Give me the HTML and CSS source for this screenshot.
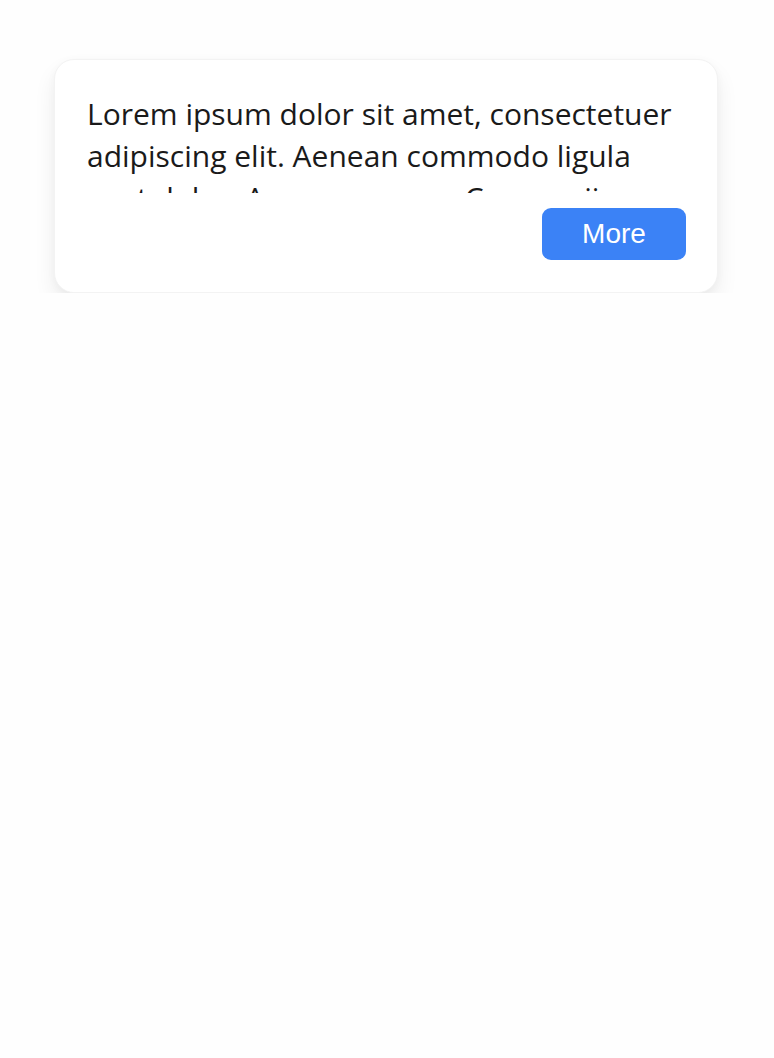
FILE: index.html
```html
<!DOCTYPE html>
<html lang="en">
<head>
<meta charset="utf-8">
<title>Card</title>
<link rel="stylesheet" href="styles.css">
</head>
<body>
<main class="page">
  <section class="card">
    <p class="card-text">Lorem ipsum dolor sit amet, consectetuer adipiscing elit. Aenean commodo ligula eget dolor. Aenean massa. Cum sociis natoque penatibus et magnis dis parturient montes, nascetur ridiculus mus.</p>
    <div class="card-actions">
      <button class="btn-more" type="button">More</button>
    </div>
  </section>
</main>
</body>
</html>
```

FILE: styles.css
```css
html, body {
  margin: 0;
  padding: 0;
  background: #fefefe;
}
.page {
  padding: 59px 56px 0 54px;
}
.card {
  box-sizing: border-box;
  width: 664px;
  background: #ffffff;
  border: 1px solid #f3f3f3;
  border-radius: 20px;
  box-shadow: 0 12px 22px rgba(0, 0, 0, 0.07), 0 2px 8px rgba(0, 0, 0, 0.03);
  padding: 33px 31px 32px 32px;
}
.card-text {
  margin: 0;
  font-family: "Open Sans", "Noto Sans", sans-serif;
  font-size: 30px;
  line-height: 42px;
  color: #1a1a1a;
  height: 100px;
  overflow: hidden;
}
.card-actions {
  display: flex;
  justify-content: flex-end;
  margin-top: 15px;
}
.btn-more {
  width: 144px;
  height: 52px;
  border: none;
  border-radius: 9px;
  background: #3b82f6;
  color: #ffffff;
  font-family: "Liberation Sans", Arial, sans-serif;
  font-size: 28px;
  padding: 0;
}
```
